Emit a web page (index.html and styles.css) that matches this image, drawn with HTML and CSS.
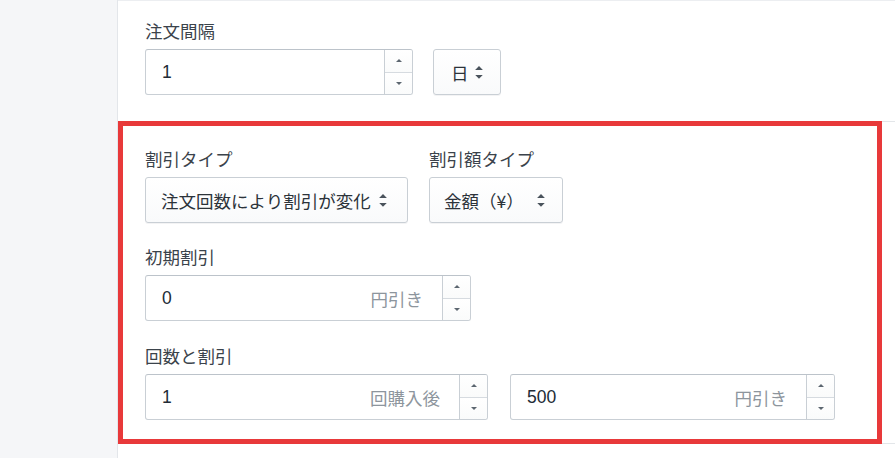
FILE: index.html
```html
<!DOCTYPE html>
<html lang="ja">
<head>
<meta charset="utf-8">
<title>割引設定</title>
<link rel="stylesheet" href="styles.css">
</head>
<body>
<div class="app">
  <aside class="sidebar"></aside>
  <main class="main">
    <section class="section section-first">
      <div class="field">
        <div class="label">注文間隔</div>
        <div class="row row-gap20">
          <div class="textfield w-268">
            <div class="tf-value">1</div>
            <div class="spinner">
              <div class="spin-seg"><svg class="spin-ico" viewBox="0 0 6 3"><path d="M0 3L3 0L6 3Z"/></svg></div>
              <div class="spin-seg spin-seg-down"><svg class="spin-ico" viewBox="0 0 6 3"><path d="M0 0L3 3L6 0Z"/></svg></div>
            </div>
          </div>
          <div class="select w-68">
            <span class="select-text">日</span>
            <svg class="select-ico" viewBox="7 5 6 10"><path d="M13 8l-3-3-3 3h6zm-.1 4L10 14.9 7.1 12h5.8z"/></svg>
          </div>
        </div>
      </div>
    </section>

    <section class="section section-second">
      <div class="highlight">
        <div class="row row-gap21">
          <div class="field">
            <div class="label">割引タイプ</div>
            <div class="select w-263">
              <span class="select-text">注文回数により割引が変化</span>
              <svg class="select-ico" viewBox="7 5 6 10"><path d="M13 8l-3-3-3 3h6zm-.1 4L10 14.9 7.1 12h5.8z"/></svg>
            </div>
          </div>
          <div class="field">
            <div class="label">割引額タイプ</div>
            <div class="select w-134">
              <span class="select-text">金額（¥）</span>
              <svg class="select-ico" viewBox="7 5 6 10"><path d="M13 8l-3-3-3 3h6zm-.1 4L10 14.9 7.1 12h5.8z"/></svg>
            </div>
          </div>
        </div>

        <div class="field field-spaced">
          <div class="label">初期割引</div>
          <div class="textfield w-326">
            <div class="tf-value">0</div>
            <div class="tf-suffix">円引き</div>
            <div class="spinner">
              <div class="spin-seg"><svg class="spin-ico" viewBox="0 0 6 3"><path d="M0 3L3 0L6 3Z"/></svg></div>
              <div class="spin-seg spin-seg-down"><svg class="spin-ico" viewBox="0 0 6 3"><path d="M0 0L3 3L6 0Z"/></svg></div>
            </div>
          </div>
        </div>

        <div class="field field-spaced2">
          <div class="label">回数と割引</div>
          <div class="row row-gap22">
            <div class="textfield w-343">
              <div class="tf-value">1</div>
              <div class="tf-suffix">回購入後</div>
              <div class="spinner">
                <div class="spin-seg"><svg class="spin-ico" viewBox="0 0 6 3"><path d="M0 3L3 0L6 3Z"/></svg></div>
                <div class="spin-seg spin-seg-down"><svg class="spin-ico" viewBox="0 0 6 3"><path d="M0 0L3 3L6 0Z"/></svg></div>
              </div>
            </div>
            <div class="textfield w-325">
              <div class="tf-value">500</div>
              <div class="tf-suffix">円引き</div>
              <div class="spinner">
                <div class="spin-seg"><svg class="spin-ico" viewBox="0 0 6 3"><path d="M0 3L3 0L6 3Z"/></svg></div>
                <div class="spin-seg spin-seg-down"><svg class="spin-ico" viewBox="0 0 6 3"><path d="M0 0L3 3L6 0Z"/></svg></div>
              </div>
            </div>
          </div>
        </div>
      </div>
    </section>

    <section class="section section-rest"></section>
  </main>
</div>
</body>
</html>
```

FILE: styles.css
```css
* { box-sizing: border-box; }

html, body {
  margin: 0;
  padding: 0;
  height: 100%;
  background: #ffffff;
}

body {
  font-family: "Liberation Sans", "Noto Sans CJK JP", sans-serif;
  font-size: 17.5px;
  color: #212b36;
}

.app {
  display: flex;
  min-height: 458px;
}

.sidebar {
  width: 118px;
  flex: 0 0 118px;
  background: #f5f6f8;
  border-right: 1px solid #e3e6ea;
}

.main {
  flex: 1;
  display: flex;
  flex-direction: column;
}

.section-first {
  border-top: 1px solid #eceef1;
  padding: 17px 0 26px 27px;
  height: 121px;
}

.section-second {
  border-top: 1px solid #e3e6e9;
  border-bottom: 1px solid #e3e6e9;
}

.highlight {
  margin: -1px 13px -1px 0;
  border: 5px solid #e8393a;
  padding: 20px 0 0 22px;
  height: 323px;
}

.section-rest {
  flex: 1;
}

.field {
  display: flex;
  flex-direction: column;
}

.field-spaced { margin-top: 21px; }
.field-spaced2 { margin-top: 22px; }

.label {
  line-height: 25px;
  margin-bottom: 6px;
  color: #3b434b;
  font-family: "Noto Sans CJK JP", sans-serif;
}

.row {
  display: flex;
  align-items: flex-end;
}
.row-gap20 { gap: 20px; }
.row-gap21 { gap: 21px; }
.row-gap22 { gap: 22px; }

.textfield {
  display: flex;
  height: 46px;
  border: 1px solid #c9cfd5;
  border-top-color: #bcc3ca;
  border-radius: 3px;
  background: #ffffff;
  overflow: hidden;
}

.tf-value {
  flex: 1;
  display: flex;
  align-items: center;
  padding-left: 16px;
  color: #212b36;
}

.tf-suffix {
  display: flex;
  align-items: center;
  padding-right: 19px;
  color: #8d959d;
  font-family: "Noto Sans CJK JP", sans-serif;
}

.spinner {
  width: 28px;
  flex: 0 0 28px;
  border-left: 1px solid #c9cfd5;
  display: flex;
  flex-direction: column;
}

.spin-seg {
  flex: 1;
  display: flex;
  align-items: center;
  justify-content: center;
  background: linear-gradient(#ffffff, #fafbfb);
}

.spin-seg-down {
  border-top: 1px solid #d6dbe0;
}

.spin-ico {
  width: 6px;
  height: 3px;
  fill: #5c6670;
}

.select {
  display: flex;
  align-items: center;
  justify-content: space-between;
  height: 46px;
  border: 1px solid #c9cfd5;
  border-radius: 3px;
  background: linear-gradient(#ffffff, #f9fafb);
  box-shadow: 0 1px 0 rgba(22, 29, 37, 0.05);
  padding: 0 17px 0 15px;
  font-family: "Noto Sans CJK JP", sans-serif;
  color: #2c333a;
}

.select-ico {
  width: 8px;
  height: 13px;
  fill: #4a535c;
  flex: 0 0 8px;
}

.w-268 { width: 268px; }
.w-68 { width: 68px; padding-left: 17px; }
.w-263 { width: 263px; padding-right: 20px; }
.w-134 { width: 134px; padding-left: 14px; }
.w-326 { width: 326px; }
.w-343 { width: 343px; }
.w-325 { width: 325px; }
```
